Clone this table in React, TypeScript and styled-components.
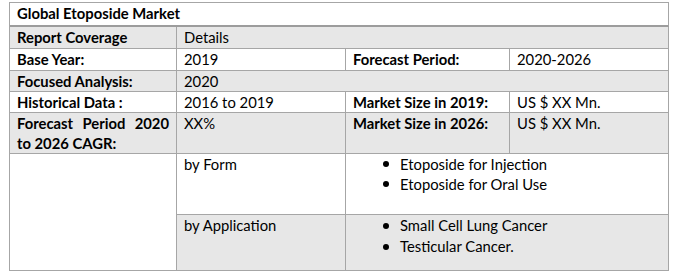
import React from "react";
import styled, { createGlobalStyle } from "styled-components";

const Global = createGlobalStyle`
  html, body { margin: 0; padding: 0; background: #ffffff; }
  body { font-family: Lato, "Open Sans", sans-serif; color: #000; }
`;

const Page = styled.div`
  padding: 2px 0 0 9px;
`;

const Table = styled.div`
  display: grid;
  width: 660px;
  box-sizing: border-box;
  grid-template-columns: 167px 169px 164px 159px;
  grid-template-rows: 24px 22px 22px 21px 21px 41px 61px 56px;
  border-top: 1px solid #a6a6a6;
  border-left: 1px solid #a6a6a6;
  font-size: 14.8px;
  line-height: 20px;
`;

const Cell = styled.div<{
  $span?: number;
  $rows?: number;
  $shade?: boolean;
  $bold?: boolean;
  $justify?: boolean;
  $thick?: boolean;
}>`
  grid-column: span ${(p) => p.$span ?? 1};
  grid-row: span ${(p) => p.$rows ?? 1};
  background: ${(p) => (p.$shade ? "#e7e7e7" : "#ffffff")};
  font-weight: ${(p) => (p.$bold ? 700 : 400)};
  text-align: ${(p) => (p.$justify ? "justify" : "left")};
  text-align-last: left;
  border-right: 1px solid #a6a6a6;
  border-bottom: ${(p) => (p.$thick ? "2px solid #9c9c9c" : "1px solid #a6a6a6")};
  padding: 0 7px;
  overflow: hidden;
`;

const List = styled.ul`
  list-style: none;
  margin: 0;
  padding: 0 0 0 30px;
`;

const Item = styled.li<{ $tall?: boolean }>`
  display: flex;
  align-items: center;
  gap: 11px;
  line-height: ${(p) => (p.$tall ? "21px" : "20px")};
`;

const Dot = styled.span`
  width: 6px;
  height: 6px;
  border-radius: 50%;
  background: #000;
  flex: none;
`;

export default function App() {
  return (
    <>
      <Global />
      <Page>
        <Table>
          <Cell $span={4} $bold $thick>
            Global Etoposide Market
          </Cell>

          <Cell $shade $bold>Report Coverage</Cell>
          <Cell $shade $span={3}>Details</Cell>

          <Cell $bold>Base Year:</Cell>
          <Cell>2019</Cell>
          <Cell $bold>Forecast Period:</Cell>
          <Cell>2020-2026</Cell>

          <Cell $shade $bold>Focused Analysis:</Cell>
          <Cell $shade $span={3}>2020</Cell>

          <Cell $bold>Historical Data :</Cell>
          <Cell>2016 to 2019</Cell>
          <Cell $bold>Market Size in 2019:</Cell>
          <Cell>US $ XX Mn.</Cell>

          <Cell $shade $bold $justify>
            Forecast Period 2020 to 2026 CAGR:
          </Cell>
          <Cell $shade>XX%</Cell>
          <Cell $shade $bold>Market Size in 2026:</Cell>
          <Cell $shade>US $ XX Mn.</Cell>

          <Cell $rows={2} />
          <Cell>by Form</Cell>
          <Cell $span={2}>
            <List>
              <Item><Dot />Etoposide for Injection</Item>
              <Item><Dot />Etoposide for Oral Use</Item>
            </List>
          </Cell>

          <Cell $shade>by Application</Cell>
          <Cell $shade $span={2}>
            <List>
              <Item $tall><Dot />Small Cell Lung Cancer</Item>
              <Item $tall><Dot />Testicular Cancer.</Item>
            </List>
          </Cell>
        </Table>
      </Page>
    </>
  );
}
